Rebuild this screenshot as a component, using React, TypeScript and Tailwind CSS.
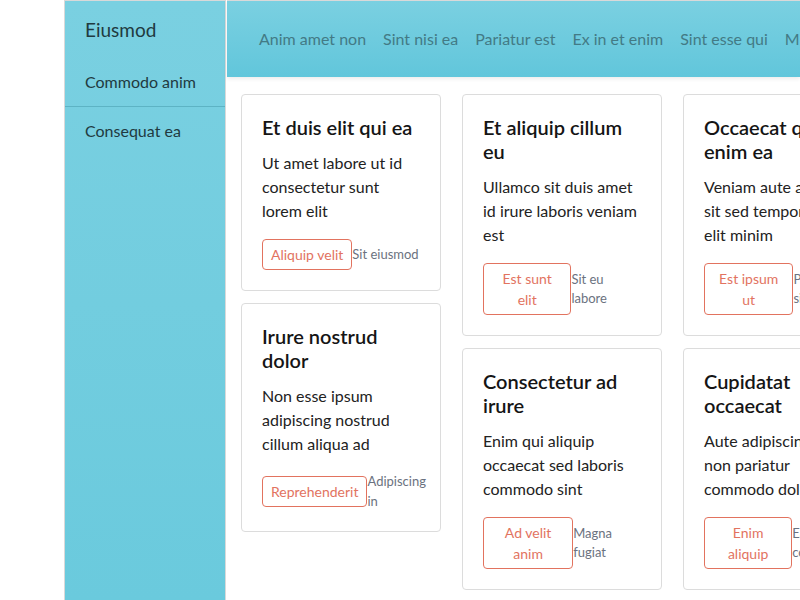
import React from 'react';

interface Card {
  title: string;
  body: string;
  action: string;
  note: string;
}

const navItems = ['Anim amet non', 'Sint nisi ea', 'Pariatur est', 'Ex in et enim', 'Sint esse qui', 'Minim est'];

const columns: Card[][] = [
  [
    { title: 'Et duis elit qui ea', body: 'Ut amet labore ut id consectetur sunt lorem elit', action: 'Aliquip velit', note: 'Sit eiusmod' },
    { title: 'Irure nostrud dolor', body: 'Non esse ipsum adipiscing nostrud cillum aliqua ad', action: 'Reprehenderit', note: 'Adipiscing in' },
  ],
  [
    { title: 'Et aliquip cillum eu', body: 'Ullamco sit duis amet id irure laboris veniam est', action: 'Est sunt elit', note: 'Sit eu labore' },
    { title: 'Consectetur ad irure', body: 'Enim qui aliquip occaecat sed laboris commodo sint', action: 'Ad velit anim', note: 'Magna fugiat' },
  ],
  [
    { title: 'Occaecat qui enim ea', body: 'Veniam aute amet\nsit sed tempor\nelit minim', action: 'Est ipsum ut', note: 'Proident sint' },
    { title: 'Cupidatat occaecat', body: 'Aute adipiscing\nnon pariatur\ncommodo dolor', action: 'Enim aliquip', note: 'Ea commodo' },
  ],
];

function CardBox({ card }: { card: Card }) {
  return (
    <div className="w-[200px] shrink-0 rounded border border-[#dcdcdc] bg-white p-5">
      <h3 className="text-[20px] font-semibold leading-6 text-[#151515]">{card.title}</h3>
      <p className="mt-3 whitespace-pre-line text-base leading-6 text-[#222]">{card.body}</p>
      <div className="mt-4 flex items-center">
        <button className="rounded border border-[#e2735f] px-2 py-1 text-center text-sm leading-[1.5] text-[#e2735f]">
          {card.action}
        </button>
        <span className="text-[13px] leading-[1.5] text-[#6b7280]">{card.note}</span>
      </div>
    </div>
  );
}

export default function App() {
  return (
    <div className="flex h-[600px] w-[800px] overflow-hidden bg-white font-['Lato','Open_Sans',sans-serif]">
      <div className="w-16 shrink-0" />
      <aside className="w-[162px] shrink-0 border-x border-t border-[#d9d9d9] bg-gradient-to-b from-[#7ad0e1] to-[#6acadd] text-[#213a40]">
        <div className="px-5 pb-[16px] pt-[17px] text-[19px] leading-6">Eiusmod</div>
        <div className="flex h-[49px] items-center border-b border-[#5db3c4] px-5 text-base">Commodo anim</div>
        <div className="flex h-12 items-center px-5 text-base">Consequat ea</div>
      </aside>
      <main className="ml-px flex min-w-0 flex-1 flex-col">
        <header className="relative z-10 flex h-[77px] shrink-0 items-center gap-[17px] whitespace-nowrap border-t border-[#d9d9d9] bg-gradient-to-b from-[#7ad0e1] to-[#61c6db] pl-8 shadow-[0_2px_4px_rgba(0,0,0,0.08)]">
          {navItems.map((item) => (
            <span key={item} className="text-base text-[#437a85]">
              {item}
            </span>
          ))}
        </header>
        <div className="flex gap-[21px] pl-[14px] pt-[17px]">
          {columns.map((col, i) => (
            <div key={i} className="flex shrink-0 flex-col gap-3">
              {col.map((card) => (
                <CardBox key={card.title} card={card} />
              ))}
            </div>
          ))}
        </div>
      </main>
    </div>
  );
}
